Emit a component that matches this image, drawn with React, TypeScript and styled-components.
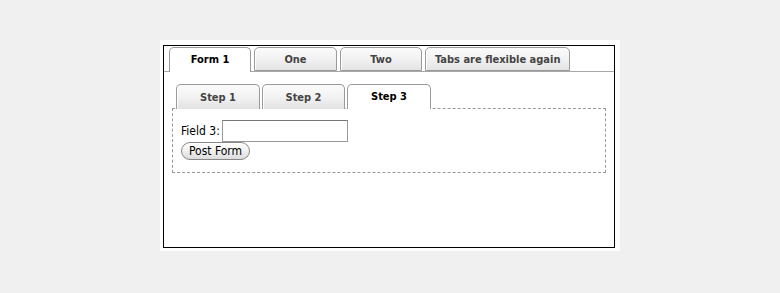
import styled, { createGlobalStyle } from "styled-components";

const GlobalStyle = createGlobalStyle`
  html, body {
    margin: 0;
    padding: 0;
    background: #f0f0f0;
  }
  body {
    font-family: "DejaVu Sans Condensed", "DejaVu Sans", sans-serif;
    color: #222;
  }
`;

const Page = styled.div`
  padding: 40px 0 0 160px;
`;

const Sheet = styled.div`
  width: 460px;
  height: 211px;
  box-sizing: border-box;
  background: #fff;
  padding: 5px 5px 3px 3px;
`;

const Frame = styled.div`
  width: 452px;
  height: 203px;
  box-sizing: border-box;
  border: 1px solid #000;
`;

const TabBar = styled.div<{ $inner?: boolean }>`
  display: flex;
  align-items: flex-end;
  gap: ${(p) => (p.$inner ? "2px" : "3px")};
  padding: ${(p) => (p.$inner ? "0 0 0 4px" : "1px 0 0 5px")};
  border-bottom: ${(p) => (p.$inner ? "none" : "1px solid #a8a8a8")};
  position: relative;
  z-index: 1;
`;

const Tab = styled.div<{ $active?: boolean; $w?: number }>`
  box-sizing: border-box;
  ${(p) => (p.$w ? `width: ${p.$w}px;` : "padding: 0 9px;")}
  height: ${(p) => (p.$active ? "25px" : "24px")};
  margin-bottom: ${(p) => (p.$active ? "-1px" : "0")};
  display: flex;
  align-items: center;
  justify-content: center;
  padding-bottom: ${(p) => (p.$active ? "1px" : "0")};
  font-size: 11px;
  font-weight: bold;
  color: ${(p) => (p.$active ? "#000" : "#444")};
  border: 1px solid #9a9a9a;
  border-bottom: ${(p) => (p.$active ? "none" : "1px solid #9a9a9a")};
  border-radius: 5px 5px 0 0;
  background: ${(p) =>
    p.$active ? "#fff" : "linear-gradient(to bottom, #fbfbfb 0%, #f2f2f2 50%, #e4e4e4 100%)"};
  box-shadow: inset 1px 0 0 #fff;
  white-space: nowrap;
`;

const Body = styled.div`
  padding: 12px 8px 0 8px;
`;

const InnerTabBar = styled(TabBar)`
  margin-bottom: -1px;
`;

const InnerTab = styled(Tab)`
  border-bottom: none;
  height: 25px;
  margin-bottom: 0;
  background: ${(p) =>
    p.$active ? "#fff" : "linear-gradient(to bottom, #fbfbfb 0%, #f2f2f2 50%, #e2e2e2 100%)"};
`;

const Panel = styled.div`
  border: 1px dashed #999;
  padding: 11px 8px 12px 8px;
  display: flex;
  flex-direction: column;
  align-items: flex-start;
`;

const Row = styled.div`
  display: flex;
  align-items: center;
  gap: 2px;
`;

const Label = styled.label`
  font-size: 12px;
  font-family: "DejaVu Sans Condensed", "DejaVu Sans", sans-serif;
  color: #000;
`;

const Input = styled.input`
  width: 126px;
  height: 22px;
  box-sizing: border-box;
  border: 1px solid #999;
  border-top-color: #777;
  padding: 0 3px;
  margin: 0;
  background: #fff;
`;

const Button = styled.button`
  height: 18px;
  box-sizing: border-box;
  padding: 0 7px;
  margin: 0;
  border: 1px solid #888;
  border-radius: 9px;
  background: linear-gradient(to bottom, #fff 0%, #f0f0f0 50%, #dcdcdc 100%);
  font-family: "DejaVu Sans Condensed", "DejaVu Sans", sans-serif;
  font-size: 12px;
  color: #000;
  line-height: 16px;
`;

const outerTabs = [
  { label: "Form 1", w: 82, active: true },
  { label: "One", w: 83 },
  { label: "Two", w: 82 },
  { label: "Tabs are flexible again" },
];

const innerTabs = [
  { label: "Step 1", w: 84 },
  { label: "Step 2", w: 83 },
  { label: "Step 3", w: 84, active: true },
];

export default function App() {
  return (
    <>
      <GlobalStyle />
      <Page>
        <Sheet>
          <Frame>
            <TabBar>
              {outerTabs.map((t) => (
                <Tab key={t.label} $active={t.active} $w={t.w}>
                  {t.label}
                </Tab>
              ))}
            </TabBar>
            <Body>
              <InnerTabBar $inner>
                {innerTabs.map((t) => (
                  <InnerTab key={t.label} $active={t.active} $w={t.w}>
                    {t.label}
                  </InnerTab>
                ))}
              </InnerTabBar>
              <Panel>
                <Row>
                  <Label htmlFor="field3">Field 3:</Label>
                  <Input id="field3" type="text" />
                </Row>
                <Button type="button">Post Form</Button>
              </Panel>
            </Body>
          </Frame>
        </Sheet>
      </Page>
    </>
  );
}
